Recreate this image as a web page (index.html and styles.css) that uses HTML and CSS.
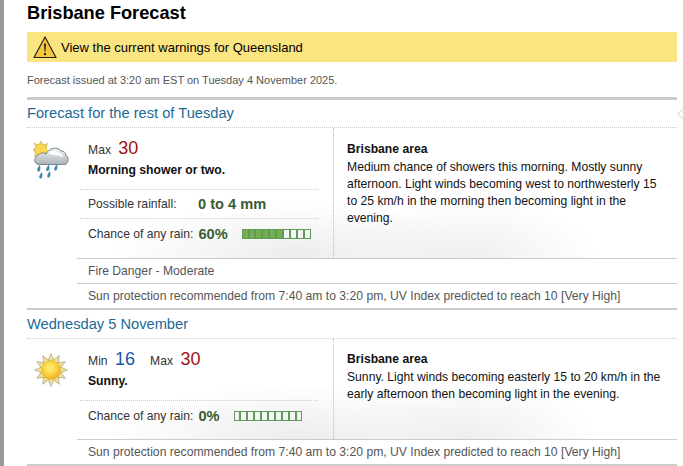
FILE: index.html
```html
<!DOCTYPE html>
<html lang="en">
<head>
  <meta charset="UTF-8" />
  <title>Brisbane Forecast</title>
  <link rel="stylesheet" href="styles.css">
</head>
<body>
  <main>
    <h1>Brisbane Forecast</h1>
    <a class="warning" href="#">
      <svg class="warning-icon" width="24" height="24" viewBox="0 0 24 24">
        <path d="M12 2 L23 22.5 H1 Z" fill="#f5c73a" stroke="#222" stroke-width="1.2" stroke-linejoin="round"/>
        <path d="M11 8.5 H13 L12.5 16.5 H11.5 Z" fill="#222"/>
        <circle cx="12" cy="19" r="1.2" fill="#222"/>
      </svg>
      View the current warnings for Queensland
    </a>
    <p class="issued">Forecast issued at 3:20 am EST on Tuesday 4 November 2025.</p>

    <section class="forecast">
      <h2>Forecast for the rest of Tuesday</h2>
      <svg class="chevron" width="6" height="12" viewBox="0 0 6 12"><path d="M5.5 1 L0.8 6 L5.5 11" fill="none" stroke="#ccc"/></svg>
      <div class="day day-first">
        <div class="summary">
          <div class="icon">
            <svg width="36" height="38" viewBox="0 0 36 38">
              <defs>
                <linearGradient id="cloud" x1="0" y1="0" x2="0" y2="1">
                  <stop offset="0" stop-color="#eef2f4"/>
                  <stop offset="1" stop-color="#aab4ba"/>
                </linearGradient>
                <path id="drop" d="M2.8 0 C3.6 2.5 3.7 4.5 2.6 6 C1.5 7.2 -0.2 6.2 0.3 4.4 C0.7 3 1.8 1.5 2.8 0 Z" fill="#3a86a8"/>
                <path id="small-ray" d="M8 -0.5 L10 4 L6 4 Z" fill="#f0d566" stroke="#b5a672" stroke-width="0.5"/>
              </defs>
              <use href="#small-ray"/>
              <use href="#small-ray" transform="rotate(45 8 9)"/>
              <use href="#small-ray" transform="rotate(-45 8 9)"/>
              <use href="#small-ray" transform="rotate(-90 8 9)"/>
              <use href="#small-ray" transform="rotate(-135 8 9)"/>
              <circle cx="8" cy="9" r="6" fill="#f8d84e" stroke="#dcae30" stroke-width="0.5"/>
              <path d="M6 23.5 C1 23.5 0 16.5 5 14.5 C6 12 10 11 13 13 C15 7 25 5 28 10 C31 10 33 12 32.5 14 C36 15 36 22.5 32 23.5 Z" fill="url(#cloud)" stroke="#6f7a80" stroke-width="0.9"/>
              <path d="M15 13 C18 9 24 9 26 12 C28 12 30 14 30 16 C25 14 20 14 15 13 Z" fill="#fbfcfd"/>
              <use href="#drop" x="4" y="24"/>
              <use href="#drop" x="13" y="23.5"/>
              <use href="#drop" x="21" y="23"/>
              <use href="#drop" x="6" y="31"/>
              <use href="#drop" x="14" y="30"/>
            </svg>
          </div>
          <div class="info">
            <div class="temps"><span class="label">Max</span> <em class="max">30</em></div>
            <div class="desc">Morning shower or two.</div>
            <div class="row row-rain"><span class="row-label">Possible rainfall:</span><strong class="amount">0 to 4 mm</strong></div>
            <div class="row"><span>Chance of any rain:</span><strong class="chance">60%</strong>
              <span class="meter"><i class="on"></i><i class="on"></i><i class="on"></i><i class="on"></i><i class="on"></i><i class="on"></i><i></i><i></i><i></i><i></i></span>
            </div>
          </div>
        </div>
        <div class="area">
          <h3>Brisbane area</h3>
          <p>Medium chance of showers this morning. Mostly sunny afternoon. Light winds becoming west to northwesterly 15 to 25 km/h in the morning then becoming light in the evening.</p>
        </div>
      </div>
      <p class="note">Fire Danger - Moderate</p>
      <p class="note">Sun protection recommended from 7:40 am to 3:20 pm, UV Index predicted to reach 10 [Very High]</p>
    </section>

    <section class="forecast forecast-next">
      <h2>Wednesday 5 November</h2>
      <div class="day day-second">
        <div class="summary">
          <div class="icon">
            <svg width="34" height="34" viewBox="0 0 34 34">
              <defs>
                <radialGradient id="sun" cx="0.45" cy="0.4" r="0.6">
                  <stop offset="0" stop-color="#fff07a"/>
                  <stop offset="0.6" stop-color="#fbd33c"/>
                  <stop offset="1" stop-color="#eeaa22"/>
                </radialGradient>
                <path id="ray" d="M17 0.5 L20.5 9 L13.5 9 Z" fill="#f4e08e" stroke="#a9a48c" stroke-width="0.7" stroke-linejoin="round"/>
              </defs>
              <use href="#ray"/>
              <use href="#ray" transform="rotate(30 17 17)"/>
              <use href="#ray" transform="rotate(60 17 17)"/>
              <use href="#ray" transform="rotate(90 17 17)"/>
              <use href="#ray" transform="rotate(120 17 17)"/>
              <use href="#ray" transform="rotate(150 17 17)"/>
              <use href="#ray" transform="rotate(180 17 17)"/>
              <use href="#ray" transform="rotate(210 17 17)"/>
              <use href="#ray" transform="rotate(240 17 17)"/>
              <use href="#ray" transform="rotate(270 17 17)"/>
              <use href="#ray" transform="rotate(300 17 17)"/>
              <use href="#ray" transform="rotate(330 17 17)"/>
              <circle cx="17" cy="17" r="9.5" fill="url(#sun)" stroke="#e0b038" stroke-width="0.5"/>
            </svg>
          </div>
          <div class="info">
            <div class="temps"><span class="label">Min</span> <em class="min">16</em><span class="label label-max">Max</span> <em class="max">30</em></div>
            <div class="desc">Sunny.</div>
            <div class="row"><span>Chance of any rain:</span><strong class="chance">0%</strong>
              <span class="meter"><i></i><i></i><i></i><i></i><i></i><i></i><i></i><i></i><i></i><i></i></span>
            </div>
          </div>
        </div>
        <div class="area">
          <h3>Brisbane area</h3>
          <p>Sunny. Light winds becoming easterly 15 to 20 km/h in the early afternoon then becoming light in the evening.</p>
        </div>
      </div>
      <p class="note">Sun protection recommended from 7:40 am to 3:20 pm, UV Index predicted to reach 10 [Very High]</p>
    </section>
  </main>
</body>
</html>
```

FILE: styles.css
```css
* {
  box-sizing: border-box;
}
html, body {
  height: 100%;
}
body {
  margin: 0;
  font-family: "Liberation Sans", Arial, sans-serif;
  font-size: 12.16px;
  color: #333;
  background: #fff;
  overflow: hidden;
  border-left: 4px solid #999;
}
main {
  padding: 0 6px 0 23px;
}
h1 {
  margin: 0;
  height: 32px;
  padding-top: 3px;
  font-size: 18.2px;
  line-height: 20px;
  color: #000;
}
.warning {
  display: flex;
  align-items: center;
  gap: 4px;
  height: 30px;
  padding-left: 6px;
  background: #fbe581;
  color: #000;
  font-size: 13px;
  text-decoration: none;
}
.warning-icon {
  flex: none;
}
.issued {
  margin: 0;
  height: 35px;
  padding-top: 12px;
  font-size: 11px;
  line-height: 13px;
  color: #555;
}
.forecast {
  position: relative;
  border-top: 3px solid #ccc;
}
.forecast-next {
  border-top-width: 2px;
  border-bottom: 2px solid #ccc;
}
.chevron {
  position: absolute;
  right: -6px;
  top: 8px;
}
h2 {
  margin: 0;
  height: 28px;
  padding-top: 4px;
  font-size: 14.67px;
  font-weight: normal;
  line-height: 18px;
  color: #1b6a96;
  border-bottom: 1px dotted #ccc;
}
.forecast-next h2 {
  height: 29px;
  padding-top: 5px;
}
.day {
  display: flex;
  background:
    radial-gradient(ellipse 190px 55px at 270px 100%, #ececec, rgba(255,255,255,0)),
    radial-gradient(ellipse 130px 60px at 440px 100%, #eeeeee, rgba(255,255,255,0));
}
.day-first {
  height: 130px;
}
.day-second {
  height: 100px;
}
.summary {
  display: flex;
  width: 307px;
  padding-top: 9px;
  border-right: 1px dotted #bbb;
}
.icon {
  width: 53px;
  flex: none;
  padding: 4px 0 0 6px;
}
.day-second .icon {
  padding: 5px 0 0 7px;
}
.info {
  width: 238px;
}
.temps {
  height: 22px;
  padding-left: 8px;
  line-height: 22px;
}
.temps em {
  font-style: normal;
  font-size: 18px;
  margin-left: 4px;
}
.label-max {
  margin-left: 15px;
}
.max {
  color: #9c1313;
}
.min {
  color: #1458a8;
}
.desc {
  height: 31px;
  padding: 3px 0 0 8px;
  font-weight: bold;
  line-height: 16px;
  color: #111;
  border-bottom: 1px dotted #ccc;
}
.row {
  display: flex;
  align-items: center;
  height: 29px;
  padding-left: 8px;
  border-bottom: 1px dotted #ccc;
}
.row:last-child {
  border-bottom: 0;
}
.row-label {
  width: 110px;
}
.amount {
  font-size: 14.6px;
  color: #3a5c32;
}
.chance {
  margin-left: 5px;
  font-size: 14.6px;
  color: #3a5c32;
}
.meter {
  display: flex;
  margin-left: 14px;
}
.meter i {
  width: 6.9px;
  height: 10px;
  border: 1px solid #5f9a58;
}
.meter .on {
  background: #74b04f;
}
.area {
  flex: 1;
  padding: 13px 14px 0 13px;
  color: #111;
}
.day-second .area {
  padding-top: 12px;
}
h3 {
  margin: 0;
  font-size: 12.16px;
  line-height: 16px;
  color: #111;
}
.area p {
  margin: 2px 0 0;
  line-height: 17px;
}
.note {
  margin: 0 0 0 50px;
  height: 25px;
  padding-left: 11px;
  border-top: 1px solid #ccc;
  line-height: 24px;
  color: #555;
}
```
